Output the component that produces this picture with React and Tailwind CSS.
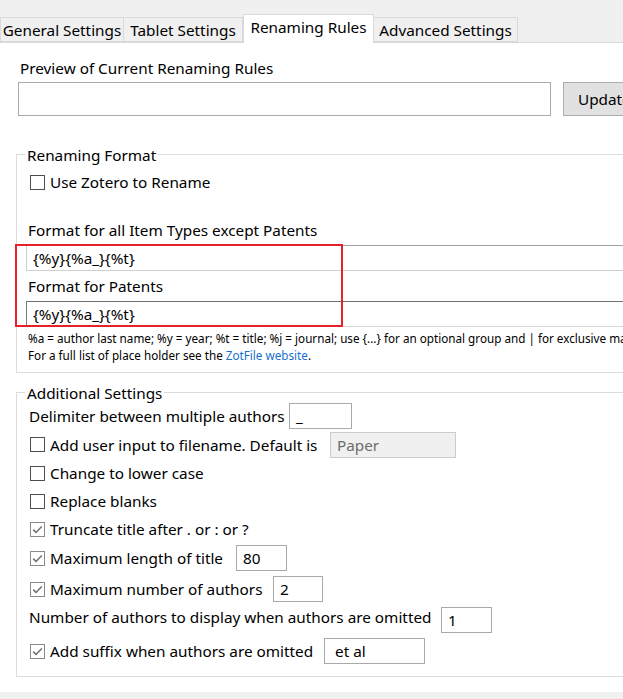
import React from "react";

// Zotero / ZotFile preferences pane, "Renaming Rules" tab

const Check = ({ checked }) => (
  <span
    className={
      "flex h-[15px] w-[15px] shrink-0 items-center justify-center border bg-white " +
      (checked ? "border-[#8a8a8a]" : "border-[#4f4f4f]")
    }
  >
    {checked && (
      <svg width="13" height="13" viewBox="0 0 13 13">
        <path d="M2.2 6.6 L5 9.4 L10.8 3.4" fill="none" stroke="#707070" strokeWidth="1.5" />
      </svg>
    )}
  </span>
);

const SmallInput = ({ value, className = "" }) => (
  <div className={"flex h-[26px] items-center border border-[#a9a9a9] bg-white pl-[6px] " + className}>
    {value}
  </div>
);

const Tab = ({ label, active, w }) =>
  active ? (
    <div
      className={
        "relative z-10 -mb-[1px] flex h-[29px] items-start justify-center border border-b-0 border-[#d9d9d9] bg-white pt-[2px] " +
        w
      }
    >
      {label}
    </div>
  ) : (
    <div
      className={
        "flex h-[25px] items-center justify-center border border-l-0 border-[#d9d9d9] bg-[#f0f0f0] first:border-l " +
        w
      }
    >
      {label}
    </div>
  );

const Legend = ({ children }) => (
  <span className="absolute left-[8px] top-[-10px] bg-white px-[2px] leading-[20px]">{children}</span>
);

export default function App() {
  return (
    <div className="h-[699px] w-[623px] overflow-hidden bg-[#f0f0f0] font-['Noto_Sans',sans-serif] text-[15.3px] leading-[20px] text-black">
      {/* tabs */}
      <div className="flex h-[42px] items-end">
        <Tab label="General Settings" w="w-[124px]" />
        <Tab label="Tablet Settings" w="w-[119px]" />
        <Tab label="Renaming Rules" w="w-[131px]" active />
        <Tab label="Advanced Settings" w="w-[144px]" />
      </div>

      {/* panel */}
      <div className="relative h-[650px] border-t border-[#d9d9d9] bg-white">
        <div className="pl-[20px] pt-[15px]">Preview of Current Renaming Rules</div>
        <div className="mt-[4px] flex pl-[18px]">
          <div className="h-[34px] w-[533px] shrink-0 border border-[#a9a9a9] bg-white" />
          <div className="ml-[12px] flex h-[34px] w-[100px] shrink-0 items-center border border-[#adadad] bg-[#e1e1e1] pl-[14px]">
            Update
          </div>
        </div>

        {/* Renaming Format */}
        <div className="relative ml-[16px] mt-[38px] w-[700px] border border-[#dcdcdc] pb-[8px]">
          <Legend>Renaming Format</Legend>
          <div className="mt-[16px] flex h-[22px] items-center pl-[13px]">
            <Check />
            <span className="ml-[5px]">Use Zotero to Rename</span>
          </div>
          <div className="mt-[27px] pl-[11px]">Format for all Item Types except Patents</div>
          <div className="ml-[9px] mt-[5px] flex h-[26px] items-center border border-[#cfcfcf] border-t-[#a0a0a0] pl-[6px]">
            {"{%y}{%a_}{%t}"}
          </div>
          <div className="mt-[5px] pl-[11px]">Format for Patents</div>
          <div className="ml-[9px] mt-[5px] flex h-[26px] items-center border border-[#d9d9d9] border-l-[#7a7a7a] border-t-[#707070] pl-[6px]">
            {"{%y}{%a_}{%t}"}
          </div>
          <div className="mt-[3px] whitespace-nowrap pl-[11px] text-[11.7px] leading-[17px]">
            %a = author last name; %y = year; %t = title; %j = journal; use {"{...}"} for an optional group and | for exclusive matches
          </div>
          <div className="whitespace-nowrap pl-[11px] text-[11.7px] leading-[17px]">
            For a full list of place holder see the <span className="text-[#1a6fd0]">ZotFile website</span>.
          </div>
          {/* highlight annotation */}
          <div className="pointer-events-none absolute left-[-2px] top-[89px] h-[83px] w-[328px] border-2 border-[#e8202a]" />
        </div>

        {/* Additional Settings */}
        <div className="relative ml-[16px] mt-[19px] w-[700px] border border-[#dcdcdc] pb-[9px] pt-[9px]">
          <Legend>Additional Settings</Legend>
          <div className="flex h-[28px] items-center pl-[12px]">
            <span className="w-[260px]">Delimiter between multiple authors</span>
            <SmallInput value="_" className="w-[63px]" />
          </div>
          <div className="flex h-[29px] items-center pl-[13px]">
            <Check />
            <span className="ml-[5px] w-[280px]">Add user input to filename. Default is</span>
            <div className="flex h-[26px] w-[126px] items-center border border-[#cccccc] bg-[#f0f0f0] pl-[6px] text-[#6d6d6d]">
              Paper
            </div>
          </div>
          <div className="flex h-[28px] items-center pl-[13px]">
            <Check />
            <span className="ml-[5px]">Change to lower case</span>
          </div>
          <div className="flex h-[28px] items-center pl-[13px]">
            <Check />
            <span className="ml-[5px]">Replace blanks</span>
          </div>
          <div className="flex h-[28px] items-center pl-[13px]">
            <Check checked />
            <span className="ml-[5px]">Truncate title after . or : or ?</span>
          </div>
          <div className="flex h-[30px] items-center pl-[13px]">
            <Check checked />
            <span className="ml-[5px] w-[186px]">Maximum length of title</span>
            <SmallInput value="80" className="w-[51px]" />
          </div>
          <div className="flex h-[32px] items-center pl-[13px]">
            <Check checked />
            <span className="ml-[5px] w-[223px]">Maximum number of authors</span>
            <SmallInput value="2" className="w-[50px]" />
          </div>
          <div className="flex h-[30px] items-center pl-[12px]">
            <span className="-mt-[6px] w-[412px]">Number of authors to display when authors are omitted</span>
            <SmallInput value="1" className="w-[51px]" />
          </div>
          <div className="flex h-[32px] items-center pl-[13px]">
            <Check checked />
            <span className="ml-[5px] w-[274px]">Add suffix when authors are omitted</span>
            <SmallInput value="et al" className="w-[101px] pl-[10px]" />
          </div>
        </div>
      </div>
    </div>
  );
}
